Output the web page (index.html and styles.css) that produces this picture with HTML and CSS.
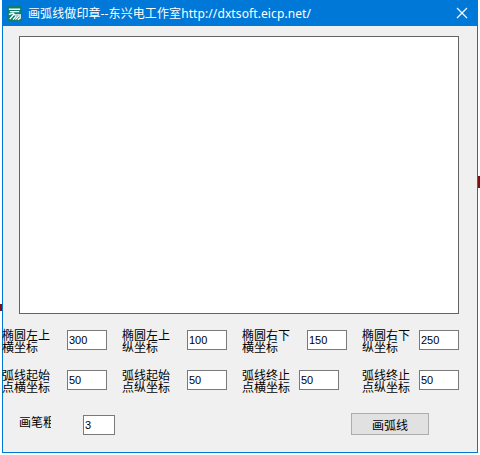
FILE: index.html
```html
<!DOCTYPE html>
<html lang="en">
<head>
    <meta charset="UTF-8">
    <meta name="viewport" content="width=device-width, initial-scale=1.0">
    <title>画弧线做印章</title>
    <link rel="stylesheet" href="styles.css">
</head>

<body>
    <div class="window">
        <div class="titlebar">
            <svg class="app_icon" width="15" height="15" viewBox="0 0 16 16">
                <rect width="16" height="16" fill="#0d7f70"/>
                <path d="M2 3.5H14M3 6H13M2 9L7 7.5M8 8L3 14M7 9.5H14V13L11.5 14.5M10 10.5L6.5 14.5M12.5 10.5L9 14.5" stroke="#fff" stroke-width="1.5" fill="none"/>
            </svg>
            <span class="title_text">画弧线做印章--东兴电工作室http://dxtsoft.eicp.net/</span>
            <svg class="close_icon" width="12" height="12" viewBox="0 0 12 12">
                <path d="M1 1L11 11M11 1L1 11" stroke="#fff" stroke-width="1.2" fill="none"/>
            </svg>
        </div>

        <div class="content">
            <div class="canvas"></div>

            <div class="field_row">
                <div class="field"><label>椭圆左上横坐标</label><input type="text" value="300"></div>
                <div class="field"><label>椭圆左上纵坐标</label><input type="text" value="100"></div>
                <div class="field"><label>椭圆右下横坐标</label><input type="text" value="150"></div>
                <div class="field field_short"><label>椭圆右下纵坐标</label><input type="text" value="250"></div>
            </div>

            <div class="field_row">
                <div class="field"><label>弧线起始点横坐标</label><input type="text" value="50"></div>
                <div class="field"><label>弧线起始点纵坐标</label><input type="text" value="50"></div>
                <div class="field field_short"><label>弧线终止点横坐标</label><input type="text" value="50"></div>
                <div class="field field_short"><label>弧线终止点纵坐标</label><input type="text" value="50"></div>
            </div>

            <div class="bottom_row">
                <span class="pen_label">画笔粗</span>
                <input class="pen_input" type="text" value="3">
                <button class="draw_btn">画弧线</button>
            </div>
        </div>
    </div>

    <!-- bits of the window behind that stick out -->
    <div class="behind behind_left"></div>
    <div class="behind behind_right"></div>
</body>
</html>
```

FILE: styles.css
```css
html, body {
    height: 100%;
    margin: 0;
    padding: 0;
    background: #fff;
    overflow: hidden;
}

body {
    font-family: "Noto Sans CJK SC", "Liberation Sans", sans-serif;
    font-size: 12px;
    color: #000;
}

.window {
    width: 476px;
    height: 453px;
    margin-left: 2px;
    border: 1px solid #0078d7;
    border-top: 0;
    box-sizing: border-box;
    background: #f0f0f0;
}

.titlebar {
    display: flex;
    align-items: center;
    height: 26px;
    background: #0078d7;
    padding: 0 9px 0 4px;
}

.app_icon {
    flex: none;
}

.title_text {
    flex: 1;
    margin-left: 6px;
    margin-top: -1px;
    color: #fff;
    font-family: "Noto Sans", "Noto Sans CJK SC", sans-serif;
    font-size: 12px;
    letter-spacing: 0.1px;
    white-space: nowrap;
}

.content {
    padding: 10px 18px 0 16px;
}

.canvas {
    height: 278px;
    background: #fff;
    border: 1px solid #646464;
    box-sizing: border-box;
}

.field_row {
    display: grid;
    grid-template-columns: repeat(4, 120px);
    margin-left: -16px;
    margin-top: 16px;
    height: 24px;
}

.field {
    display: flex;
    align-items: flex-start;
}

.field label {
    width: 65px;
    flex: none;
    line-height: 12px;
    margin: -1px 0 0 -1px;
    box-sizing: border-box;
    padding-right: 13px;
}

.field_short label {
    width: 57px;
    padding-right: 5px;
}

input {
    width: 40px;
    height: 20px;
    margin: 0;
    padding: 0 1px;
    border: 1px solid #7a7a7a;
    border-radius: 0;
    box-sizing: border-box;
    background: #fff;
    color: #000;
    font-family: "Liberation Sans", sans-serif;
    font-size: 11px;
    outline: none;
}

.bottom_row {
    display: flex;
    align-items: flex-start;
    margin-top: 19px;
}

.pen_label {
    width: 32px;
    flex: none;
    height: 16px;
    line-height: 14px;
    margin-top: 2px;
    white-space: nowrap;
    overflow: hidden;
}

.pen_input {
    width: 32px;
    margin-left: 32px;
    margin-top: 2px;
}

.draw_btn {
    width: 78px;
    height: 22px;
    margin-left: 236px;
    padding: 0;
    border: 1px solid #adadad;
    background: #e1e1e1;
    color: #000;
    font-family: "Noto Sans CJK SC", sans-serif;
    font-size: 12px;
}

.behind {
    position: absolute;
    background: #7a1010;
}

.behind_left {
    left: 0;
    top: 304px;
    width: 2px;
    height: 7px;
}

.behind_right {
    left: 478px;
    top: 176px;
    width: 2px;
    height: 12px;
}
```
